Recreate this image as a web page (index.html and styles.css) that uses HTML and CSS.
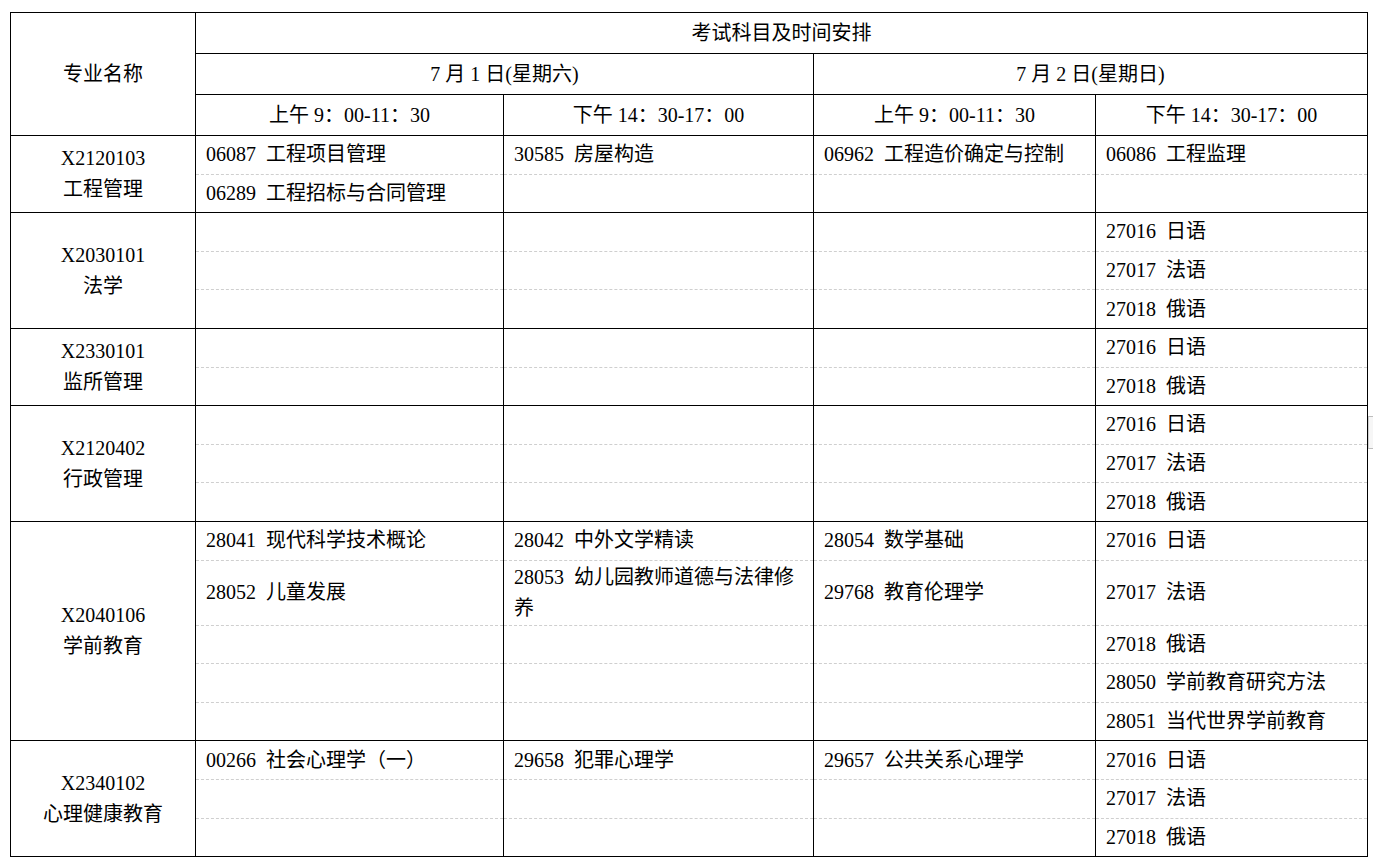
FILE: index.html
```html
<!DOCTYPE html>
<html lang="zh-CN">
<head>
<meta charset="utf-8">
<title>考试科目及时间安排</title>
<link rel="stylesheet" href="styles.css">
</head>
<body>
<table class="sched">
  <colgroup>
    <col class="c-major">
    <col class="c-a">
    <col class="c-b">
    <col class="c-c">
    <col class="c-d">
  </colgroup>
  <thead>
    <tr class="hr">
      <th rowspan="3">专业名称</th>
      <th colspan="4">考试科目及时间安排</th>
    </tr>
    <tr class="hr">
      <th colspan="2">7 月 1 日(星期六)</th>
      <th colspan="2">7 月 2 日(星期日)</th>
    </tr>
    <tr class="hr">
      <th>上午 9：00-11：30</th>
      <th>下午 14：30-17：00</th>
      <th>上午 9：00-11：30</th>
      <th>下午 14：30-17：00</th>
    </tr>
  </thead>
  <tbody>
    <tr class="first">
      <td class="major" rowspan="2">X2120103<br>工程管理</td>
      <td>06087&nbsp; 工程项目管理</td>
      <td>30585&nbsp; 房屋构造</td>
      <td>06962&nbsp; 工程造价确定与控制</td>
      <td>06086&nbsp; 工程监理</td>
    </tr>
    <tr class="sub">
      <td>06289&nbsp; 工程招标与合同管理</td>
      <td></td><td></td><td></td>
    </tr>

    <tr class="first">
      <td class="major" rowspan="3">X2030101<br>法学</td>
      <td></td><td></td><td></td>
      <td>27016&nbsp; 日语</td>
    </tr>
    <tr class="sub"><td></td><td></td><td></td><td>27017&nbsp; 法语</td></tr>
    <tr class="sub"><td></td><td></td><td></td><td>27018&nbsp; 俄语</td></tr>

    <tr class="first">
      <td class="major" rowspan="2">X2330101<br>监所管理</td>
      <td></td><td></td><td></td>
      <td>27016&nbsp; 日语</td>
    </tr>
    <tr class="sub"><td></td><td></td><td></td><td>27018&nbsp; 俄语</td></tr>

    <tr class="first">
      <td class="major" rowspan="3">X2120402<br>行政管理</td>
      <td></td><td></td><td></td>
      <td>27016&nbsp; 日语</td>
    </tr>
    <tr class="sub"><td></td><td></td><td></td><td>27017&nbsp; 法语</td></tr>
    <tr class="sub"><td></td><td></td><td></td><td>27018&nbsp; 俄语</td></tr>

    <tr class="first">
      <td class="major" rowspan="5">X2040106<br>学前教育</td>
      <td>28041&nbsp; 现代科学技术概论</td>
      <td>28042&nbsp; 中外文学精读</td>
      <td>28054&nbsp; 数学基础</td>
      <td>27016&nbsp; 日语</td>
    </tr>
    <tr class="sub tall">
      <td>28052&nbsp; 儿童发展</td>
      <td>28053&nbsp; 幼儿园教师道德与法律修养</td>
      <td>29768&nbsp; 教育伦理学</td>
      <td>27017&nbsp; 法语</td>
    </tr>
    <tr class="sub"><td></td><td></td><td></td><td>27018&nbsp; 俄语</td></tr>
    <tr class="sub"><td></td><td></td><td></td><td>28050&nbsp; 学前教育研究方法</td></tr>
    <tr class="sub"><td></td><td></td><td></td><td>28051&nbsp; 当代世界学前教育</td></tr>

    <tr class="first">
      <td class="major" rowspan="3">X2340102<br>心理健康教育</td>
      <td>00266&nbsp; 社会心理学（一）</td>
      <td>29658&nbsp; 犯罪心理学</td>
      <td>29657&nbsp; 公共关系心理学</td>
      <td>27016&nbsp; 日语</td>
    </tr>
    <tr class="sub"><td></td><td></td><td></td><td>27017&nbsp; 法语</td></tr>
    <tr class="sub last"><td></td><td></td><td></td><td>27018&nbsp; 俄语</td></tr>
  </tbody>
</table>
<div class="edge-tab"></div>
</body>
</html>
```

FILE: styles.css
```css
html, body {
  margin: 0;
  padding: 0;
  background: #ffffff;
}

body {
  padding: 12px 0 0 10px;
  font-family: "Liberation Serif", "Noto Sans CJK SC", serif;
  font-size: 20px;
  color: #000;
}

.sched {
  border-collapse: collapse;
  table-layout: fixed;
  width: 1357px;
}

.c-major { width: 185px; }
.c-a { width: 308px; }
.c-b { width: 310px; }
.c-c { width: 282px; }
.c-d { width: 272px; }

.sched th {
  border: 1px solid #000;
  line-height: 31px;
  vertical-align: middle;
  font-weight: normal;
  text-align: center;
  padding: 0 4px;
}

.hr { height: 41px; }

.sched td {
  border-left: 1px solid #000;
  border-right: 1px solid #000;
  border-top: none;
  border-bottom: none;
  line-height: 31px;
  vertical-align: middle;
  padding: 1px 14px 1px 10px;
  text-align: left;
}

.sched tbody tr { height: 38.6px; }
.sched tbody tr.tall { height: 65px; }

.sched td.major {
  text-align: center;
  padding: 0 4px;
  border-top: 1px solid #000;
  border-bottom: 1px solid #000;
}

.sched tr.first td {
  border-top: 1px solid #000;
}

.sched tr.sub td {
  border-top: 1px dashed #cfcfcf;
}

.sched tr.last td {
  border-bottom: 1px solid #000;
}

.edge-tab {
  position: absolute;
  left: 1368px;
  top: 416px;
  width: 10px;
  height: 31px;
  background: #f6f6f6;
  border-top: 1px solid #bdbdbd;
  border-bottom: 1px solid #bdbdbd;
  border-left: 1px solid #d0d0d0;
}
```
